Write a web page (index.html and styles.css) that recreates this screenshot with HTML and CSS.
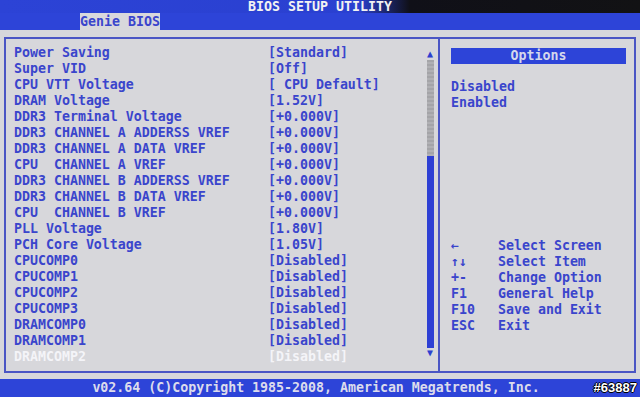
FILE: index.html
```html
<!DOCTYPE html>
<html lang="en">
<head>
  <meta charset="UTF-8">
  <title>BIOS Setup Utility</title>
  <link rel="stylesheet" href="styles.css">
</head>
<body>
  <div class="title-bar">BIOS SETUP UTILITY</div>
  <div class="tab-bar">
    <span class="tab">Genie BIOS</span>
  </div>

  <div class="frame">
    <div class="settings">
      <div class="list">
        <span>Power Saving</span><span>[Standard]</span>
        <span>Super VID</span><span>[Off]</span>
        <span>CPU VTT Voltage</span><span>[ CPU Default]</span>
        <span>DRAM Voltage</span><span>[1.52V]</span>
        <span>DDR3 Terminal Voltage</span><span>[+0.000V]</span>
        <span>DDR3 CHANNEL A ADDERSS VREF</span><span>[+0.000V]</span>
        <span>DDR3 CHANNEL A DATA VREF</span><span>[+0.000V]</span>
        <span>CPU  CHANNEL A VREF</span><span>[+0.000V]</span>
        <span>DDR3 CHANNEL B ADDERSS VREF</span><span>[+0.000V]</span>
        <span>DDR3 CHANNEL B DATA VREF</span><span>[+0.000V]</span>
        <span>CPU  CHANNEL B VREF</span><span>[+0.000V]</span>
        <span>PLL Voltage</span><span>[1.80V]</span>
        <span>PCH Core Voltage</span><span>[1.05V]</span>
        <span>CPUCOMP0</span><span>[Disabled]</span>
        <span>CPUCOMP1</span><span>[Disabled]</span>
        <span>CPUCOMP2</span><span>[Disabled]</span>
        <span>CPUCOMP3</span><span>[Disabled]</span>
        <span>DRAMCOMP0</span><span>[Disabled]</span>
        <span>DRAMCOMP1</span><span>[Disabled]</span>
        <span class="current">DRAMCOMP2</span><span class="current">[Disabled]</span>
      </div>
      <div class="scrollbar">
        <span class="arrow">&#9650;</span>
        <div class="track"></div>
        <div class="thumb"></div>
        <span class="arrow">&#9660;</span>
      </div>
    </div>

    <div class="side">
      <div class="options-head">Options</div>
      <div class="choices">
        <div>Disabled</div>
        <div>Enabled</div>
      </div>
      <div class="keys">
        <span class="key">&#8592;</span><span>Select Screen</span>
        <span class="key">&#8593;&#8595;</span><span>Select Item</span>
        <span class="key">+-</span><span>Change Option</span>
        <span class="key">F1</span><span>General Help</span>
        <span class="key">F10</span><span>Save and Exit</span>
        <span class="key">ESC</span><span>Exit</span>
      </div>
    </div>
  </div>

  <div class="footer">
    <span>v02.64 (C)Copyright 1985-2008, American Megatrends, Inc.</span>
    <span class="mark">#63887</span>
  </div>
</body>
</html>
```

FILE: styles.css
```css
body {
  margin: 0;
  width: 640px;
  height: 397px;
  overflow: hidden;
  background: #d7d7db;
  font-family: "DejaVu Sans Mono", "Liberation Mono", monospace;
  font-size: 13.28px;
  font-weight: bold;
  color: #3a45cc;
}
.title-bar {
  height: 13px;
  line-height: 13px;
  text-align: center;
  color: #f2f2f2;
  background: linear-gradient(to right, #2c43d6 0%, #2a40d0 56%, #101018 64%, #121214 100%);
}
.tab-bar {
  height: 17px;
  padding-left: 80px;
  background: #2d44d8;
}
.tab {
  display: inline-block;
  width: 80px;
  height: 17px;
  line-height: 17px;
  white-space: nowrap;
  background: #d8d8dc;
  color: #3a45cc;
}
.frame {
  margin: 7px 4px 0 4px;
  height: 332px;
  border: 2px solid #4a55c4;
  display: flex;
}
.settings {
  width: 424px;
  padding: 6px 4px 0 8px;
  display: flex;
  border-right: 2px solid #4a55c4;
}
.list {
  display: grid;
  grid-template-columns: 254px 158px;
  grid-auto-rows: 16px;
  line-height: 16px;
  white-space: pre;
}
.list .current {
  color: #f4f4f8;
}
.scrollbar {
  width: 8px;
  margin-top: 4px;
  height: 316px;
  display: flex;
  flex-direction: column;
  align-items: center;
}
.arrow {
  font-size: 10px;
  line-height: 10px;
  color: #2d3fcf;
  height: 11px;
}
.track {
  width: 7px;
  height: 96px;
  background: repeating-linear-gradient(to bottom, #a4a4a8 0, #a4a4a8 2px, #b0b0b4 2px, #b0b0b4 4px);
}
.thumb {
  width: 7px;
  height: 192px;
  background: #2d3fd4;
}
.side {
  flex: 1;
  padding: 9px 8px 0 11px;
}
.options-head {
  width: 175px;
  height: 16px;
  line-height: 16px;
  text-align: center;
  background: #2d44d8;
  color: #d4d8ec;
}
.choices {
  margin-top: 15px;
  line-height: 16px;
}
.keys {
  margin-top: 127px;
  display: grid;
  grid-template-columns: 47px auto;
  grid-auto-rows: 16px;
  line-height: 16px;
}
.footer {
  margin-top: 6px;
  height: 18px;
  line-height: 18px;
  background: #2d44d8;
  color: #dcdcec;
  position: relative;
  text-align: center;
  padding-right: 8px;
}
.footer .mark {
  position: absolute;
  right: 3px;
  top: 0;
  font-family: "Liberation Sans", sans-serif;
  font-size: 13px;
  color: #ffffff;
  text-shadow: 1px 0 #000, -1px 0 #000, 0 1px #000, 0 -1px #000;
}
```
